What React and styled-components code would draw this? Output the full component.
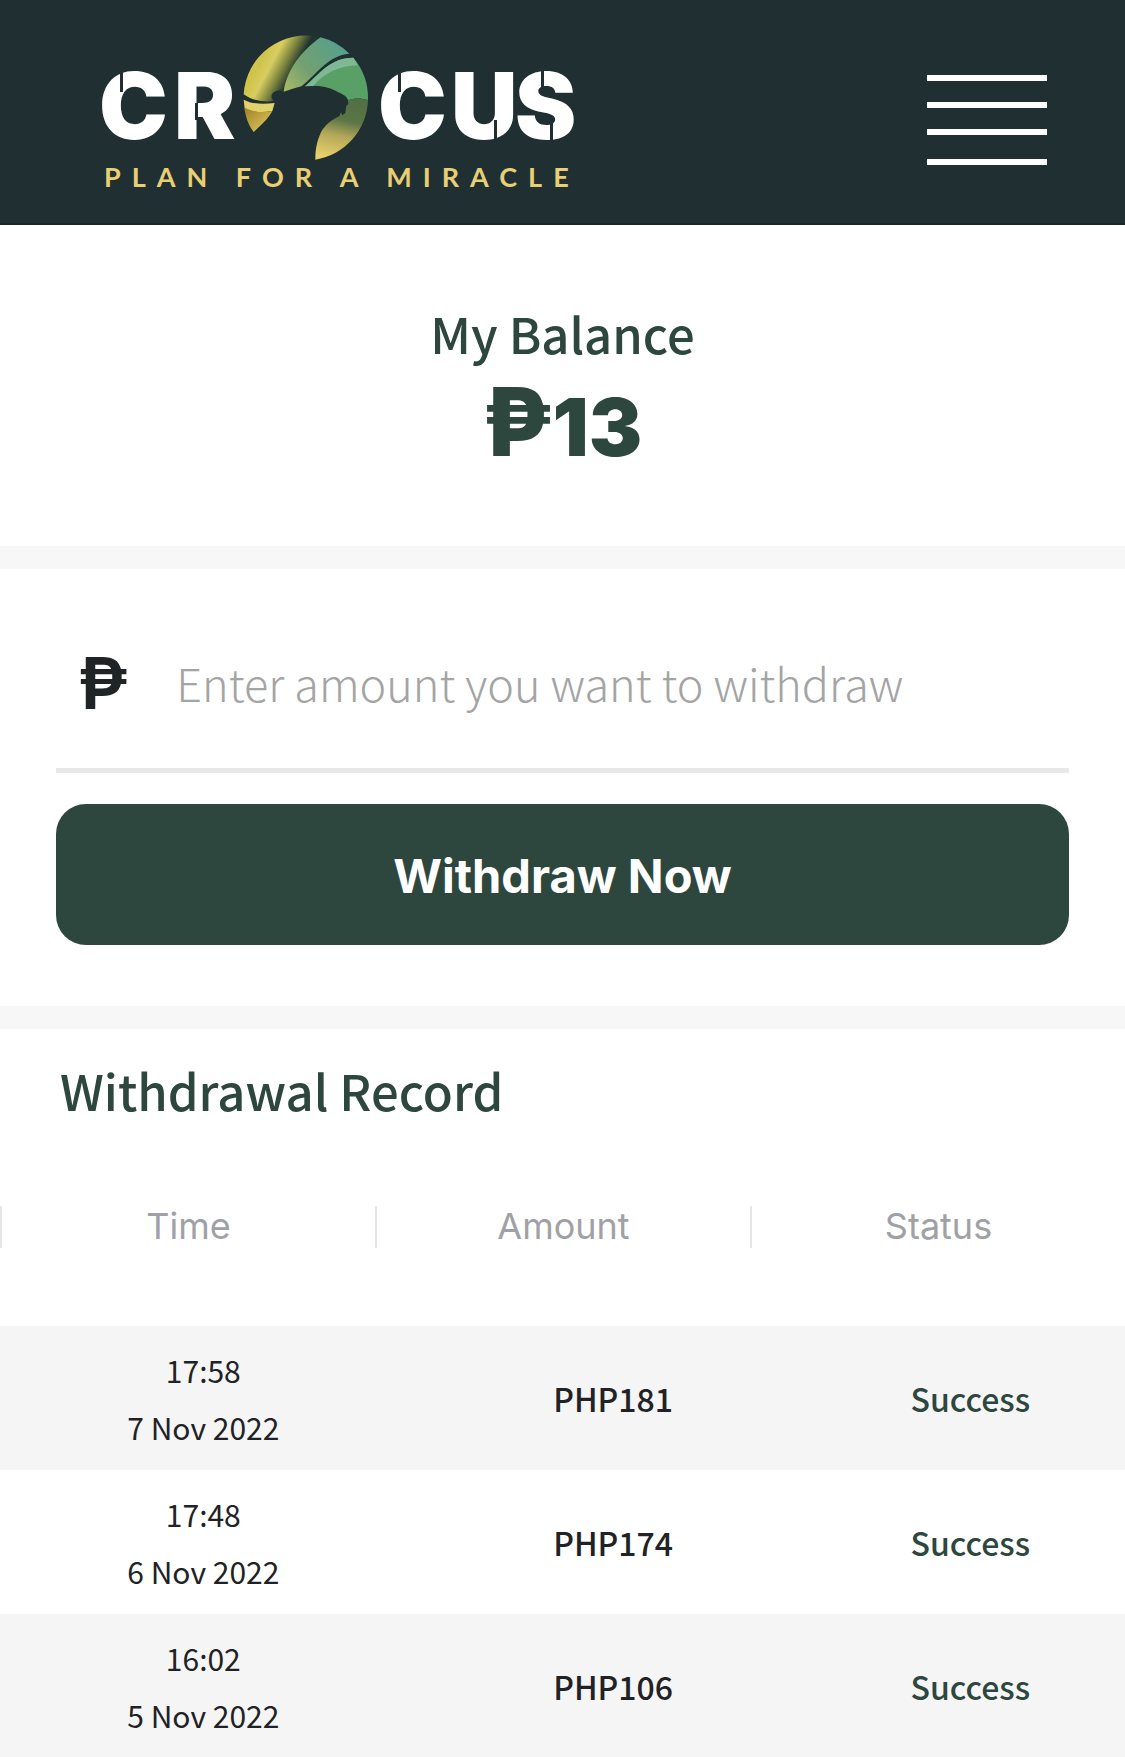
import React, { useState } from "react";
//style
import styled, { createGlobalStyle } from "styled-components";

const records = [
  { time: "17:58", date: "7 Nov 2022", amount: "PHP181", status: "Success" },
  { time: "17:48", date: "6 Nov 2022", amount: "PHP174", status: "Success" },
  { time: "16:02", date: "5 Nov 2022", amount: "PHP106", status: "Success" },
];

const Logo = () => (
  <svg width="500" height="168" viewBox="98 32 500 168" role="img">
    <title>Crocus</title>
    <defs>
      <linearGradient id="petal" gradientUnits="userSpaceOnUse" x1="118" y1="63" x2="207" y2="110">
        <stop offset="0" stopColor="#cfc54c" />
        <stop offset="0.3" stopColor="#d8cd60" />
        <stop offset="0.65" stopColor="#7f883f" />
        <stop offset="1" stopColor="#20352f" />
      </linearGradient>
      <linearGradient id="leaf" gradientUnits="userSpaceOnUse" x1="170" y1="195" x2="330" y2="60">
        <stop offset="0" stopColor="#a5b967" />
        <stop offset="0.4" stopColor="#74a070" />
        <stop offset="1" stopColor="#57a08c" />
      </linearGradient>
      <linearGradient id="tail" gradientUnits="userSpaceOnUse" x1="350" y1="222" x2="310" y2="400">
        <stop offset="0" stopColor="#527046" />
        <stop offset="0.35" stopColor="#5c7645" />
        <stop offset="0.62" stopColor="#b3a75a" />
        <stop offset="1" stopColor="#e8cf69" />
      </linearGradient>
      <linearGradient id="tip" gradientUnits="userSpaceOnUse" x1="60" y1="250" x2="110" y2="310">
        <stop offset="0" stopColor="#a9882f" />
        <stop offset="1" stopColor="#d6c257" />
      </linearGradient>
    </defs>
    <g transform="translate(230 25) scale(0.3333)">
      <path
        fill="url(#petal)"
        d="M41 208A187 187 0 0 1 272 37C215 78 172 130 161 200C150 194 132 196 126 208C122 217 126 224 132 228C100 232 65 226 41 208Z"
      />
      <path
        fill="url(#leaf)"
        d="M272 37A187 187 0 0 1 358 86C296 90 262 146 214 184C196 188 180 195 161 200C172 130 215 78 272 37Z"
      />
      <path
        fill="#58a066"
        d="M370 98A187 187 0 0 1 414 225C394 219 372 218 354 226C350 210 332 206 318 198C290 184 258 180 225 184C268 148 300 98 370 98Z"
      />
      <path
        fill="#7fb994"
        d="M370 98L384 121C330 122 282 144 250 183L225 184C268 148 300 98 370 98Z"
      />
      <path
        fill="url(#tail)"
        d="M354 226C372 218 394 219 414 225A187 187 0 0 1 256 404C256 370 262 345 273 322C285 300 305 284 328 274L333 262L337 271L346 264L349 242L355 238Z"
      />
      <path
        fill="#e2d26a"
        d="M41 224C68 238 100 238 134 234L127 258C98 264 66 262 44 250Z"
      />
      <path fill="url(#tip)" d="M43 247C66 262 98 264 127 258C115 282 92 300 71 321C55 300 46 275 43 247Z" />
    </g>
    <Wordmark y="139" x="99 174">
      CR
    </Wordmark>
    <Wordmark y="139" x="378 451 515">
      CUS
    </Wordmark>
    {/* stencil cuts */}
    <g fill="#203032">
      <rect x="120" y="68" width="3" height="24" />
      <rect x="195" y="103" width="3" height="17" />
      <rect x="398" y="68" width="3" height="24" />
      <rect x="494" y="120" width="3" height="22" />
      <rect x="541" y="68" width="3" height="20" />
      <rect x="550" y="120" width="3" height="22" />
    </g>
    <Tagline x="104" y="187">
      PLAN FOR A MIRACLE
    </Tagline>
  </svg>
);

const App = () => {
  const [amount, setAmount] = useState("");

  const submitHandler = (e) => {
    e.preventDefault();
    setAmount("");
  };

  return (
    <>
      <GlobalStyle />
      <Navbar>
        <Logo />
        <MenuButton type="button" aria-label="Menu">
          <svg width="120" height="90" viewBox="0 0 120 90" fill="#ffffff">
            <rect width="120" height="6" />
            <rect y="27" width="120" height="6" />
            <rect y="54" width="120" height="6" />
            <rect y="84" width="120" height="6" />
          </svg>
        </MenuButton>
      </Navbar>
      <main>
        <Balance>
          <Title>My Balance</Title>
          <Total>
            <Peso>₱</Peso>13
          </Total>
        </Balance>
        <Form onSubmit={submitHandler}>
          <Field>
            <label htmlFor="amount">₱</label>
            <input
              id="amount"
              type="text"
              inputMode="decimal"
              placeholder="Enter amount you want to withdraw"
              value={amount}
              onChange={(e) => setAmount(e.target.value)}
            />
          </Field>
          <Submit type="submit">Withdraw Now</Submit>
        </Form>
        <Record>
          <Title>Withdrawal Record</Title>
          <Table>
            <thead>
              <HeadRow>
                <th>Time</th>
                <th>Amount</th>
                <th>Status</th>
              </HeadRow>
            </thead>
            <tbody>
              {records.map((record) => (
                <Row key={record.date}>
                  <TimeCell>
                    <p>{record.time}</p>
                    <p>{record.date}</p>
                  </TimeCell>
                  <Cell>{record.amount}</Cell>
                  <Cell $success>{record.status}</Cell>
                </Row>
              ))}
            </tbody>
          </Table>
        </Record>
      </main>
    </>
  );
};

const GlobalStyle = createGlobalStyle`
  * {
    box-sizing: border-box;
    margin: 0;
    padding: 0;
  }
  body {
    background: #ffffff;
    color: #212225;
    font-family: "Noto Sans CJK SC", "Noto Sans", sans-serif;
  }
`;

const Navbar = styled.header`
  display: flex;
  justify-content: space-between;
  align-items: flex-start;
  padding: 32px 78px 23px 98px;
  background: #203032;
  border-bottom: 2px solid #1b2827;
`;

const Wordmark = styled.text`
  fill: #ffffff;
  font-family: Inter, sans-serif;
  font-size: 92px;
  font-weight: 900;
`;

const Tagline = styled.text`
  fill: #e8cf74;
  font-family: Lato, sans-serif;
  font-size: 27px;
  font-weight: 700;
  letter-spacing: 11px;
`;

const MenuButton = styled.button`
  margin-top: 43px;
  border: none;
  background: none;
  cursor: pointer;
  svg {
    display: block;
  }
`;

const Title = styled.h2`
  color: #2d473e;
  font-size: 49px;
  font-weight: 500;
  line-height: 60px;
`;

const Balance = styled.section`
  padding: 78px 56px 65px;
  border-bottom: 23px solid #f7f7f7;
  text-align: center;
`;

const Total = styled.p`
  display: flex;
  justify-content: center;
  align-items: baseline;
  margin-top: 4px;
  color: #2d473e;
  font-family: Inter, sans-serif;
  font-size: 80px;
  font-weight: 900;
  line-height: 109px;
`;

const Peso = styled.span`
  font-size: 95px;
  font-weight: 800;
`;

const Form = styled.form`
  padding: 64px 56px 61px;
  border-bottom: 23px solid #f7f7f7;
`;

const Field = styled.div`
  display: flex;
  align-items: center;
  gap: 48px;
  height: 140px;
  margin-bottom: 31px;
  padding: 0 22px 35px;
  border-bottom: 5px solid #e8e8e8;
  label {
    color: #202427;
    font-family: Inter, sans-serif;
    font-size: 72px;
    font-weight: 600;
    line-height: 100px;
  }
  input {
    flex: 1;
    min-width: 0;
    border: none;
    outline: none;
    background: none;
    color: #212225;
    font-family: inherit;
    font-size: 45px;
    font-weight: 200;
    line-height: 60px;
  }
  input::placeholder {
    color: #a4a4a4;
    opacity: 1;
  }
`;

const Submit = styled.button`
  display: block;
  width: 100%;
  padding: 41px 40px 39px;
  border: none;
  border-radius: 30px;
  background: #2d473e;
  color: #ffffff;
  font-family: Inter, sans-serif;
  font-size: 47px;
  font-weight: 700;
  line-height: 61px;
  cursor: pointer;
`;

const Record = styled.section`
  padding-top: 31px;
  ${Title} {
    padding: 0 60px;
  }
`;

const Table = styled.table`
  display: block;
  margin-top: 86px;
  thead,
  tbody {
    display: block;
  }
`;

const HeadRow = styled.tr`
  display: grid;
  grid-template-columns: 1fr 1fr 1fr;
  margin-bottom: 78px;
  th {
    padding-bottom: 2px;
    border-left: 2px solid #e6e6e6;
    color: #a0a1a7;
    font-family: Inter, sans-serif;
    font-size: 36px;
    font-weight: 400;
    line-height: 40px;
  }
`;

const Row = styled.tr`
  display: grid;
  grid-template-columns: 73fr 72fr 55fr;
  align-items: center;
  background: #ffffff;
  text-align: center;
  &:nth-child(odd) {
    background: #f5f5f5;
  }
`;

const TimeCell = styled.td`
  padding: 16px 4px 14px 0;
  font-size: 30px;
  line-height: 57px;
`;

const Cell = styled.td`
  color: ${({ $success }) => ($success ? "#2d473e" : "#212225")};
  font-size: 32px;
  font-weight: 500;
  line-height: 48px;
`;

export default App;
